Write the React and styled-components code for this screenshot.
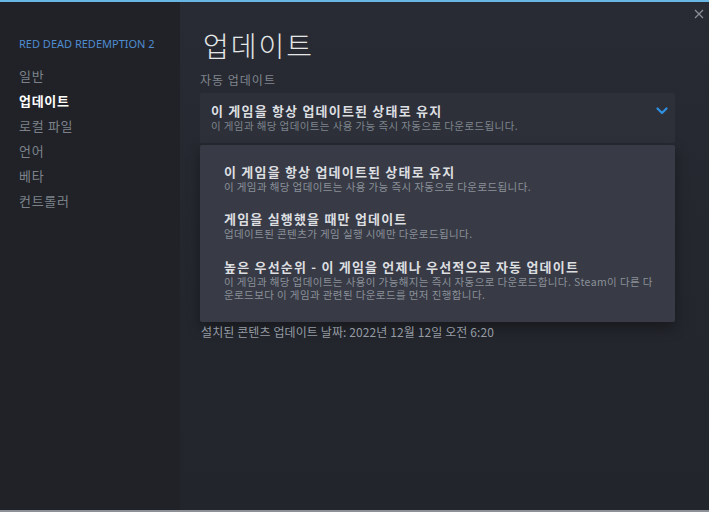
import React from "react";
import styled, { createGlobalStyle } from "styled-components";

const GlobalStyle = createGlobalStyle`
  html, body {
    margin: 0;
    padding: 0;
    background: #1f2127;
  }
  * {
    box-sizing: border-box;
  }
`;

const Window = styled.div`
  display: flex;
  width: 709px;
  height: 512px;
  border-top: 2px solid #67b6e4;
  border-bottom: 2px solid #8d9096;
  font-family: "Noto Sans CJK KR", "Noto Sans", sans-serif;
  overflow: hidden;
`;

const Sidebar = styled.nav`
  width: 180px;
  flex-shrink: 0;
  background-color: #202228;
  padding: 35px 0 0 19px;
  display: flex;
  flex-direction: column;
`;

const GameTitle = styled.div`
  font-family: "Noto Sans", "Liberation Sans", sans-serif;
  font-size: 11px;
  line-height: 14px;
  color: #4f8cd0;
  margin-bottom: 12px;
`;

const NavItem = styled.div`
  font-size: 13px;
  line-height: 25px;
  letter-spacing: 0.7px;
  color: ${(p) => (p.$active ? "#ffffff" : "#7d828a")};
  font-weight: ${(p) => (p.$active ? 700 : 400)};
  cursor: pointer;
`;

const Main = styled.main`
  position: relative;
  flex: 1;
  background: linear-gradient(180deg, #282b33 0%, #24272e 45%, #22252b 100%);
  padding: 26px 34px 0 20px;
  display: flex;
  flex-direction: column;
`;

const CloseButton = styled.button`
  position: absolute;
  top: 5px;
  right: 3px;
  width: 14px;
  height: 14px;
  padding: 0;
  border: none;
  background: none;
  display: flex;
  align-items: center;
  justify-content: center;
  cursor: pointer;
`;

const PageTitle = styled.h1`
  margin: 0 0 10px 3px;
  font-size: 28px;
  line-height: 34px;
  font-weight: 300;
  color: #e4e6e8;
  letter-spacing: 2px;
`;

const SectionLabel = styled.div`
  font-size: 12px;
  line-height: 16px;
  letter-spacing: 1px;
  color: #80868e;
  margin-bottom: 5px;
`;

const Dropdown = styled.div`
  display: flex;
  align-items: flex-start;
  justify-content: space-between;
  background-color: #2d3038;
  padding: 9px 7px 10px 11px;
  border-radius: 2px;
  cursor: pointer;
`;

const OptionTitle = styled.div`
  font-size: 13px;
  line-height: 17px;
  font-weight: 700;
  letter-spacing: 1.2px;
  color: #dcdee0;
`;

const OptionDesc = styled.div`
  font-size: 10.5px;
  line-height: 13.5px;
  letter-spacing: 0.4px;
  word-break: break-all;
  color: ${(p) => (p.$dim ? "#7f858e" : "#8a9099")};
`;

const Chevron = styled.div`
  padding-top: 5px;
  display: flex;
`;

const Menu = styled.div`
  margin-top: 2px;
  background-color: #383b45;
  padding: 18px 21px 20px 24px;
  display: flex;
  flex-direction: column;
  gap: 17px;
  box-shadow: 0 6px 14px rgba(0, 0, 0, 0.35);
  border-radius: 2px;
`;

const MenuItem = styled.div`
  cursor: pointer;
`;

const InstalledDate = styled.div`
  margin-top: 2px;
  margin-left: 1px;
  font-size: 12px;
  line-height: 16px;
  letter-spacing: 0.1px;
  color: #959ba3;
`;

const options = [
  {
    title: "이 게임을 항상 업데이트된 상태로 유지",
    desc: "이 게임과 해당 업데이트는 사용 가능 즉시 자동으로 다운로드됩니다.",
  },
  {
    title: "게임을 실행했을 때만 업데이트",
    desc: "업데이트된 콘텐츠가 게임 실행 시에만 다운로드됩니다.",
  },
  {
    title: "높은 우선순위 - 이 게임을 언제나 우선적으로 자동 업데이트",
    desc: "이 게임과 해당 업데이트는 사용이 가능해지는 즉시 자동으로 다운로드합니다. Steam이 다른 다운로드보다 이 게임과 관련된 다운로드를 먼저 진행합니다.",
  },
];

const navItems = ["일반", "업데이트", "로컬 파일", "언어", "베타", "컨트롤러"];

export default function App() {
  return (
    <>
      <GlobalStyle />
      <Window>
        <Sidebar>
          <GameTitle>RED DEAD REDEMPTION 2</GameTitle>
          {navItems.map((item) => (
            <NavItem key={item} $active={item === "업데이트"}>
              {item}
            </NavItem>
          ))}
        </Sidebar>

        <Main>
          <CloseButton aria-label="닫기">
            <svg width="10" height="10" viewBox="0 0 10 10">
              <path d="M1 1 L9 9 M9 1 L1 9" stroke="#8b9097" strokeWidth="1.2" />
            </svg>
          </CloseButton>

          <PageTitle>업데이트</PageTitle>
          <SectionLabel>자동 업데이트</SectionLabel>

          <Dropdown>
            <div>
              <OptionTitle>{options[0].title}</OptionTitle>
              <OptionDesc $dim>{options[0].desc}</OptionDesc>
            </div>
            <Chevron>
              <svg width="12" height="8" viewBox="0 0 12 8">
                <path
                  d="M1.5 1.5 L6 6 L10.5 1.5"
                  fill="none"
                  stroke="#2f8fe0"
                  strokeWidth="2.2"
                  strokeLinecap="round"
                  strokeLinejoin="round"
                />
              </svg>
            </Chevron>
          </Dropdown>

          <Menu>
            {options.map((opt) => (
              <MenuItem key={opt.title}>
                <OptionTitle>{opt.title}</OptionTitle>
                <OptionDesc>{opt.desc}</OptionDesc>
              </MenuItem>
            ))}
          </Menu>

          <InstalledDate>설치된 콘텐츠 업데이트 날짜: 2022년 12월 12일 오전 6:20</InstalledDate>
        </Main>
      </Window>
    </>
  );
}
